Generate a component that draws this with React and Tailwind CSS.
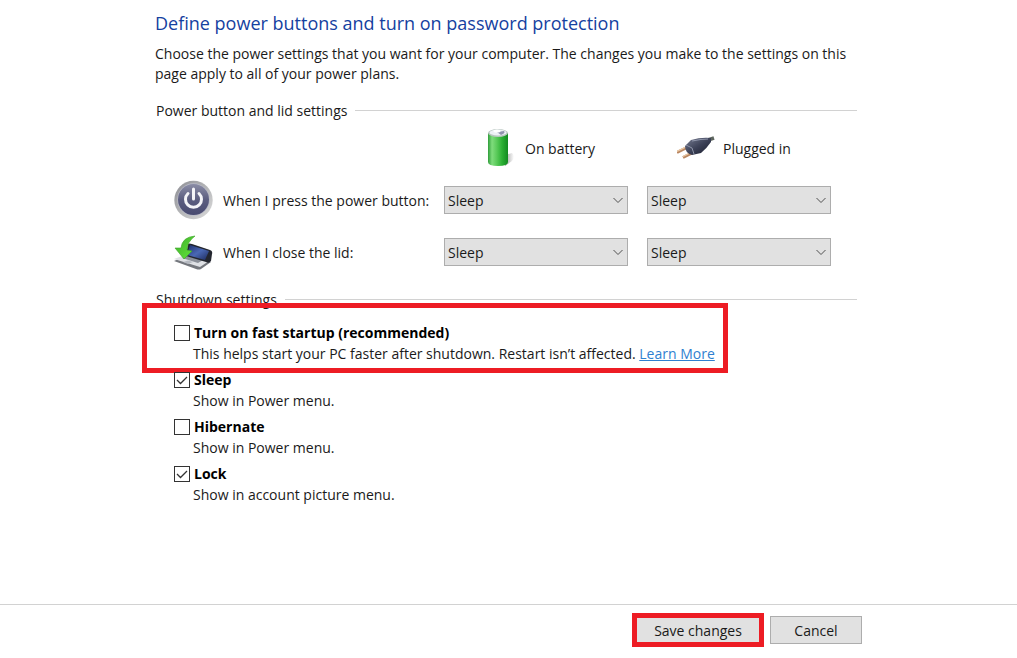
import React, { useState } from "react";

const sleepActions = ["Do nothing", "Sleep", "Hibernate", "Shut down"];

const shutdownOptions = [
  {
    id: "fast-startup",
    title: "Turn on fast startup (recommended)",
    description: "This helps start your PC faster after shutdown. Restart isn’t affected.",
    link: "Learn More",
    checked: false,
    highlighted: true,
  },
  { id: "sleep", title: "Sleep", description: "Show in Power menu.", checked: true },
  { id: "hibernate", title: "Hibernate", description: "Show in Power menu.", checked: false },
  { id: "lock", title: "Lock", description: "Show in account picture menu.", checked: true },
];

function BatteryIcon() {
  return (
    <svg width="28" height="40" viewBox="0 0 28 40" aria-hidden="true">
      <defs>
        <linearGradient id="cell" x1="0" x2="1" y1="0" y2="0">
          <stop offset="0" stopColor="#2f9e3a" />
          <stop offset="0.2" stopColor="#7fdc7c" />
          <stop offset="0.45" stopColor="#58c958" />
          <stop offset="0.7" stopColor="#2cb034" />
          <stop offset="1" stopColor="#128a20" />
        </linearGradient>
        <linearGradient id="cellShadow" x1="0" x2="1" y1="0" y2="0">
          <stop offset="0" stopColor="#8c8c8c" />
          <stop offset="1" stopColor="#ffffff" />
        </linearGradient>
      </defs>
      <path d="M18 27 L25 25 Q29 28 25 33 L18 38Z" fill="url(#cellShadow)" opacity="0.8" />
      <path d="M1 5 V34 Q1 38 11 38 Q21 38 21 34 V5Z" fill="url(#cell)" />
      <ellipse cx="11" cy="5" rx="10" ry="4" fill="#b9c6c0" />
      <ellipse cx="11" cy="4.500" rx="8.500" ry="3" fill="#eef1f5" />
      <path d="M10 4 L17 3 Q19 5 14 7Z" fill="#8f93ad" />
      <ellipse cx="10" cy="3" rx="3.500" ry="1.500" fill="#ffffff" />
    </svg>
  );
}

function PlugIcon() {
  return (
    <svg width="38" height="24" viewBox="0 0 38 24" aria-hidden="true">
      <defs>
        <linearGradient id="plugBody" x1="0" x2="1" y1="0" y2="1">
          <stop offset="0" stopColor="#777d92" />
          <stop offset="0.5" stopColor="#3d4258" />
          <stop offset="1" stopColor="#171a2b" />
        </linearGradient>
      </defs>
      <path d="M31 4 L37 2" stroke="#5e665f" strokeWidth="3.500" />
      <path d="M0 16.500 L11 11" stroke="#b98661" strokeWidth="3" />
      <path d="M0 15.500 L11 10" stroke="#eccaa6" strokeWidth="1.200" />
      <path d="M6 21.500 L17 16" stroke="#b98661" strokeWidth="3" />
      <path d="M6 20.500 L17 15" stroke="#eccaa6" strokeWidth="1.200" />
      <path d="M8 10 L14 4 Q24 1 34 2 L34 6 Q30 12 24 17 L15 19 Q8 17 8 10Z" fill="url(#plugBody)" />
      <path d="M9 9 L15 12 L17 18" stroke="#8e94a8" strokeWidth="1" fill="none" />
      <path d="M15 5 Q24 3 31 3" stroke="#8f95aa" strokeWidth="1.200" fill="none" />
    </svg>
  );
}

function PowerIcon() {
  return (
    <svg className="shrink-0" width="40" height="40" viewBox="0 0 40 40" aria-hidden="true">
      <defs>
        <linearGradient id="ring" x1="0" x2="1" y1="0" y2="1">
          <stop offset="0" stopColor="#8b8c92" />
          <stop offset="0.5" stopColor="#b5b6b8" />
          <stop offset="1" stopColor="#dcdcdc" />
        </linearGradient>
        <linearGradient id="face" x1="0" x2="0" y1="0" y2="1">
          <stop offset="0" stopColor="#8b8da6" />
          <stop offset="0.5" stopColor="#5c5e80" />
          <stop offset="1" stopColor="#484a70" />
        </linearGradient>
      </defs>
      <circle cx="19.500" cy="20" r="19.200" fill="url(#ring)" />
      <circle cx="19.500" cy="19.500" r="16.200" fill="#b9bac8" />
      <circle cx="19.500" cy="19.500" r="15.500" fill="url(#face)" />
      <path d="M14 13.500 A8 8 0 1 0 25 13.500" fill="none" stroke="#f4f4f8" strokeWidth="3" strokeLinecap="round" />
      <path d="M19.500 9 V19" stroke="#f4f4f8" strokeWidth="3" strokeLinecap="round" />
    </svg>
  );
}

function LidIcon() {
  return (
    <svg className="shrink-0" width="40" height="36" viewBox="0 0 40 36" aria-hidden="true">
      <defs>
        <linearGradient id="screen" x1="0" x2="1" y1="0" y2="1">
          <stop offset="0" stopColor="#1c2d6b" />
          <stop offset="0.5" stopColor="#4a68b4" />
          <stop offset="1" stopColor="#1d2a5c" />
        </linearGradient>
        <linearGradient id="arrow" x1="0" x2="1" y1="0" y2="1">
          <stop offset="0" stopColor="#3fae2c" />
          <stop offset="1" stopColor="#63e73a" />
        </linearGradient>
      </defs>
      <path d="M0 27 L12 22 L37 28 L27 35 Q25 36 22 35Z" fill="#74777d" />
      <path d="M0 25 L11 21 L35 27 L26 33Z" fill="#dfe1e5" />
      <path d="M8 24 L13 22 L29 26 L24 29Z" fill="#8b9099" />
      <path d="M9 28 L14 26.500 L19 28 L14 30Z" fill="#b6bac1" />
      <path d="M14 10 Q15 9 18 10 L36 16 Q39 17 38 20 L37 27 Q35 30 32 28 L12 22Z" fill="#23262f" />
      <path d="M16 11 L35 17 L31 26 L13 21Z" fill="url(#screen)" />
      <path d="M21 2 Q8 3 7 14 L1 14 L10 25 L18 17 L13 16 Q13 8 21 2Z" fill="url(#arrow)" stroke="#3da528" strokeWidth="0.600" />
    </svg>
  );
}

function SectionHeading({ children }) {
  return (
    <div className="flex items-center gap-2 pl-px">
      <h2 className="leading-5">{children}</h2>
      <div className="mb-0.5 h-px flex-1 bg-[#d2d2d2]" />
    </div>
  );
}

function ActionSelect({ label }) {
  const [value, setValue] = useState("Sleep");

  return (
    <div className="grid items-center">
      <select
        aria-label={label}
        value={value}
        onChange={(e) => setValue(e.target.value)}
        className="col-start-1 row-start-1 h-7 w-full appearance-none border border-[#adadad] bg-[#e1e1e1] pl-[3px] pr-6"
      >
        {sleepActions.map((action) => (
          <option key={action}>{action}</option>
        ))}
      </select>
      <svg
        className="pointer-events-none col-start-1 row-start-1 mr-1 justify-self-end"
        width="12"
        height="12"
        viewBox="0 0 12 12"
        fill="none"
        stroke="#505050"
        aria-hidden="true"
      >
        <path d="M1.500 4 L6 8.500 L10.500 4" />
      </svg>
    </div>
  );
}

function SettingRow({ icon, label }) {
  return (
    <>
      <div className="flex items-center gap-[9px] whitespace-nowrap">
        {icon}
        <span>{label}:</span>
      </div>
      <ActionSelect label={`${label} on battery`} />
      <ActionSelect label={`${label} plugged in`} />
    </>
  );
}

function ShutdownOption({ option }) {
  const [checked, setChecked] = useState(option.checked);

  return (
    <li className="relative">
      <div className="flex items-center gap-1">
        <span className="grid">
          <input
            id={option.id}
            type="checkbox"
            checked={checked}
            onChange={() => setChecked(!checked)}
            className="col-start-1 row-start-1 size-4 appearance-none border border-[#333333] bg-white"
          />
          {checked && (
            <svg
              className="pointer-events-none col-start-1 row-start-1"
              width="16"
              height="16"
              viewBox="0 0 16 16"
              fill="none"
              stroke="#333333"
              strokeWidth="1.300"
              aria-hidden="true"
            >
              <path d="M3 8 L6.500 11.500 L13 5" />
            </svg>
          )}
        </span>
        <label htmlFor={option.id} className="font-bold leading-[21px] text-black">
          {option.title}
        </label>
      </div>
      <p className="pl-[19px] leading-[21px]">
        {option.description}
        {option.link && (
          <>
            {" "}
            <a href="#" className="text-[#2f7fd0] underline">
              {option.link}
            </a>
          </>
        )}
      </p>
      {option.highlighted && (
        <div className="pointer-events-none absolute -bottom-[9px] -left-8 -top-[19px] w-[586px] border-5 border-[#ed1c24]" />
      )}
    </li>
  );
}

function App() {
  return (
    <div className="flex min-h-screen flex-col bg-white font-['Open_Sans','Noto_Sans',sans-serif] text-[14px] text-[#1a1a1a]">
      <main className="flex-1 pl-[155px] pr-40 pt-2">
        <h1 className="text-[18px] leading-[30px] text-[#1541a0]">
          Define power buttons and turn on password protection
        </h1>
        <p className="mt-[6px] leading-5">
          Choose the power settings that you want for your computer. The changes you make to the
          settings on this page apply to all of your power plans.
        </p>

        <section className="mt-[17px]">
          <SectionHeading>Power button and lid settings</SectionHeading>
          <div className="mt-px grid auto-rows-[52px] grid-cols-[251px_1fr_1fr] items-center gap-x-[19px] pl-[19px] pr-[26px]">
            <div className="col-start-2 flex items-center gap-[10px] pl-[43px]">
              <BatteryIcon />
              <span>On battery</span>
            </div>
            <div className="flex items-center gap-2 pl-[30px]">
              <PlugIcon />
              <span>Plugged in</span>
            </div>
            <SettingRow icon={<PowerIcon />} label="When I press the power button" />
            <SettingRow icon={<LidIcon />} label="When I close the lid" />
          </div>
        </section>

        <section className="mt-3">
          <SectionHeading>Shutdown settings</SectionHeading>
          <ul className="mt-3 flex flex-col gap-[5px] pl-[19px]">
            {shutdownOptions.map((option) => (
              <ShutdownOption key={option.id} option={option} />
            ))}
          </ul>
        </section>
      </main>

      <footer className="flex items-center justify-end gap-[6px] border-t border-[#d2d2d2] pb-[11px] pr-[155px] pt-2">
        <div className="border-5 border-[#ed1c24]">
          <button type="button" className="block h-6 w-[122px] bg-[#e1e1e1]">
            Save changes
          </button>
        </div>
        <button type="button" className="h-7 w-[92px] border border-[#adadad] bg-[#e1e1e1]">
          Cancel
        </button>
      </footer>
    </div>
  );
}

export default App;
